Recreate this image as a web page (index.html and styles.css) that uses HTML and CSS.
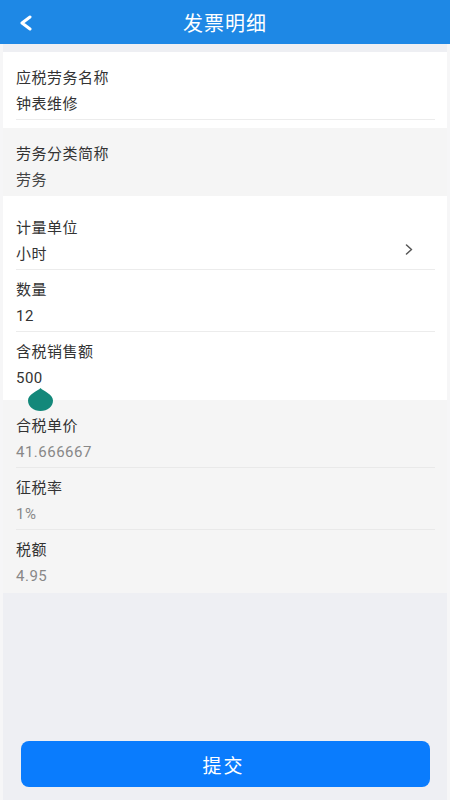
FILE: index.html
```html
<!DOCTYPE html>
<html lang="zh-CN">
<head>
    <meta charset="UTF-8">
    <meta name="viewport" content="width=device-width, initial-scale=1.0">
    <title>发票明细</title>
    <link rel="stylesheet" href="styles.css">
</head>
<body>
    <div class="pagina">
        <header class="cabecalho">
            <svg class="voltar" width="14" height="16" viewBox="0 0 14 16">
                <polyline points="11,2 3,8 11,14" fill="none" stroke="#fff" stroke-width="3" stroke-linecap="round" stroke-linejoin="round"/>
            </svg>
            <h1>发票明细</h1>
        </header>

        <div class="conteudo">
            <div class="bloco bloco-nome">
                <div class="linha">
                    <div class="texto">
                        <div class="rotulo">应税劳务名称</div>
                        <div class="valor">钟表维修</div>
                    </div>
                </div>
            </div>

            <div class="bloco cinza bloco-classe">
                <div class="linha">
                    <div class="texto">
                        <div class="rotulo">劳务分类简称</div>
                        <div class="valor escuro">劳务</div>
                    </div>
                </div>
            </div>

            <div class="bloco bloco-editar">
                <div class="linha">
                    <div class="texto">
                        <div class="rotulo">计量单位</div>
                        <div class="valor">小时</div>
                    </div>
                    <svg class="seta" width="8" height="11" viewBox="0 0 8 11">
                        <polyline points="1.5,1 6.5,5.5 1.5,10" fill="none" stroke="#555" stroke-width="1.5" stroke-linecap="round" stroke-linejoin="round"/>
                    </svg>
                </div>
                <div class="linha">
                    <div class="texto">
                        <div class="rotulo">数量</div>
                        <div class="valor">12</div>
                    </div>
                </div>
                <div class="linha">
                    <div class="texto">
                        <div class="rotulo">含税销售额</div>
                        <div class="valor com-cursor">500
                            <!-- pega do cursor de texto -->
                            <svg class="pega" width="25" height="23" viewBox="0 0 25 23">
                                <path d="M12.5 0 C15 3, 25 6, 25 12.5 C25 18.5, 19.5 23, 12.5 23 C5.5 23, 0 18.5, 0 12.5 C0 6, 10 3, 12.5 0 Z" fill="#13887a"/>
                            </svg>
                        </div>
                    </div>
                </div>
            </div>

            <div class="bloco cinza bloco-calculo">
                <div class="linha">
                    <div class="texto">
                        <div class="rotulo">合税单价</div>
                        <div class="valor claro">41.666667</div>
                    </div>
                </div>
                <div class="linha">
                    <div class="texto">
                        <div class="rotulo">征税率</div>
                        <div class="valor claro">1%</div>
                    </div>
                </div>
                <div class="linha">
                    <div class="texto">
                        <div class="rotulo">税额</div>
                        <div class="valor claro">4.95</div>
                    </div>
                </div>
            </div>

            <div class="rodape">
                <button class="botao">提交</button>
            </div>
        </div>
    </div>
</body>
</html>
```

FILE: styles.css
```css
:root {
    --azul-topo: #1e88e5;
    --azul-botao: #0a7cfd;
    --texto: #333;
    --fundo: #eeeff3;
}

* {
    box-sizing: border-box;
}

body {
    margin: 0;
    font-family: Roboto, "Noto Sans CJK SC", sans-serif;
    background: var(--fundo);
    color: var(--texto);
}

.pagina {
    display: flex;
    flex-direction: column;
    min-height: 800px;
}

.cabecalho {
    height: 44px;
    background: var(--azul-topo);
    display: flex;
    align-items: center;
    justify-content: center;
    position: relative;
}

.cabecalho h1 {
    margin: 0;
    font-size: 20px;
    font-weight: normal;
    letter-spacing: 1px;
    color: #fff;
}

.voltar {
    position: absolute;
    left: 19px;
    top: 15px;
}

.conteudo {
    flex: 1;
    display: flex;
    flex-direction: column;
    padding: 8px 3px 0;
    background: linear-gradient(to right, #f6f6f7 3px, var(--fundo) 3px, var(--fundo) 447px, #f6f6f7 447px);
}

.bloco {
    background: #fff;
    padding: 6px 12px 0 13px;
}

.bloco.cinza {
    background: #f5f5f5;
}

.bloco-nome {
    padding-bottom: 8px;
}

.bloco-nome .linha {
    border-bottom: 1px solid #ececec;
}

.bloco-classe {
    padding-bottom: 1px;
}

.bloco-editar {
    padding-top: 12px;
    padding-bottom: 7px;
}

.bloco-calculo {
    padding-bottom: 2px;
}

.linha {
    display: flex;
    padding: 10px 0 5px;
}

.linha + .linha {
    border-top: 1px solid #ececec;
}

.bloco.cinza .linha + .linha {
    border-top-color: #e9e9e9;
}

.texto {
    flex: 1;
}

.rotulo,
.valor {
    font-size: 15px;
    line-height: 20px;
    letter-spacing: 0.5px;
}

.rotulo {
    margin-bottom: 6px;
}

.valor.escuro {
    color: #444;
}

.valor.claro {
    color: #888;
}

.seta {
    align-self: flex-end;
    margin: 0 22px 9px 0;
}

.com-cursor {
    position: relative;
}

.pega {
    position: absolute;
    left: 12px;
    top: 20px;
    z-index: 2;
}

.rodape {
    margin-top: auto;
    padding: 0 17px 13px 18px;
}

.botao {
    width: 100%;
    height: 46px;
    border: 0;
    border-radius: 8px;
    background: var(--azul-botao);
    color: #fff;
    font-family: inherit;
    font-size: 19px;
    letter-spacing: 2px;
    padding-left: 2px;
}
```
